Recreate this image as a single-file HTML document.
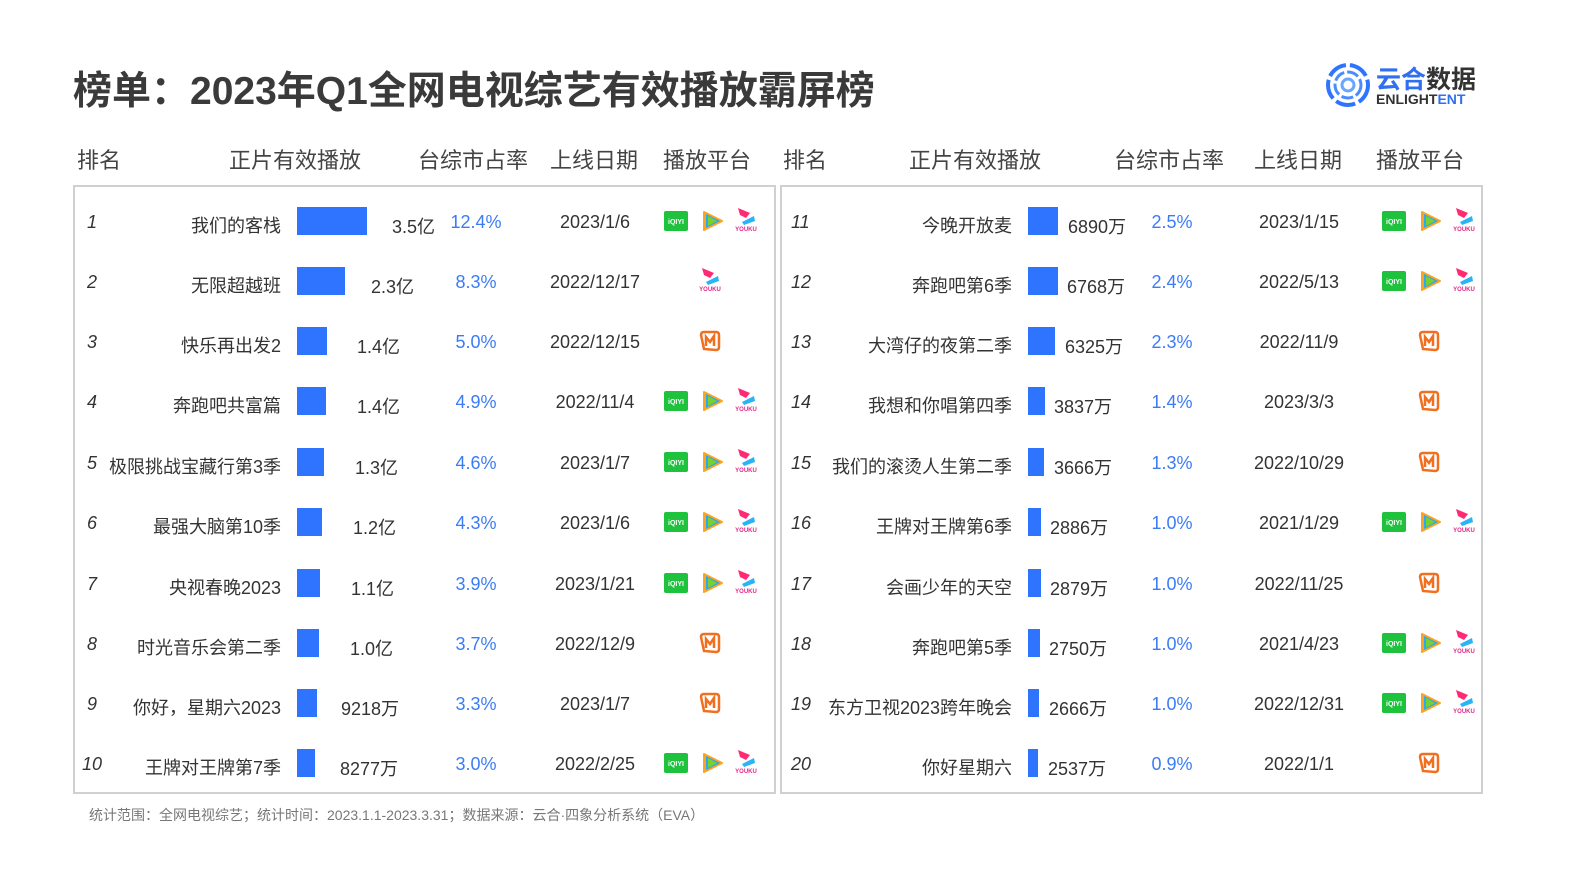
<!DOCTYPE html>
<html><head><meta charset="utf-8"><style>
*{margin:0;padding:0;box-sizing:border-box}
body{width:1587px;height:892px;background:#fff;position:relative;overflow:hidden;font-family:"Liberation Sans","Noto Sans CJK SC",sans-serif;color:#333}
.a{position:absolute;white-space:nowrap}
.t{left:73px;top:60px;font-size:39px;font-weight:bold;color:#3a3a3a;letter-spacing:0px}
.h{top:143px;font-size:22px;color:#444}
.panel{position:absolute;top:185px;height:609px;border:2px solid #d0d0d0}
.row>.a{margin-top:3px}
.r{font-size:18px;font-style:italic;color:#333}
.n{font-size:18px;text-align:right;width:200px}
.v{font-size:18px}
.p{font-size:18px;color:#3b7cf5;text-align:center;width:80px}
.d{font-size:18px;text-align:center;width:120px}
.b{position:absolute;height:28px;background:#2f74ff}
.ic{position:absolute;width:24px;height:24px}
.foot{left:89px;top:805px;font-size:14px;color:#777}
</style></head><body>
<svg width="0" height="0" style="position:absolute">
<defs>
<symbol id="iq" viewBox="0 0 24 24"><rect x="0" y="2" width="24" height="20" rx="2" fill="#1ec23c"/><text x="12" y="15" font-size="7" font-weight="bold" fill="#fff" text-anchor="middle" font-family="Liberation Sans">iQIYI</text></symbol>
<symbol id="tx" viewBox="0 0 24 24"><path d="M4 3 L22 12 L4 21 Z" fill="#ffa21f" stroke="#ffa21f" stroke-width="2" stroke-linejoin="round"/><path d="M6 5 L20 12 L6 19 Z" fill="#28a8f5"/><path d="M8 7 L17 12 L8 17 Z" fill="#7ad12b"/></symbol>
<symbol id="yk" viewBox="0 0 24 24"><path d="M4 1 L16 6 L12 11 L6 8 Z" fill="#ff2a73"/><path d="M8 15 L20 9 L21 14 L10 18 Z" fill="#2bb3f7"/><text x="12" y="24" font-size="6" font-weight="bold" fill="#e5268a" text-anchor="middle" font-family="Liberation Sans">YOUKU</text></symbol>
<symbol id="mg" viewBox="0 0 24 24"><path d="M6 20 L3 6 Q3 3 6 3 L18 3 Q21 3 21 6 L21 18 Q21 21 18 21 Z" fill="none" stroke="#f07020" stroke-width="2.5"/><path d="M8 17 V8 L12 13 L16 7 V17" fill="none" stroke="#f07020" stroke-width="2.5"/></symbol>
</defs></svg>

<div class="a t">榜单：2023年Q1全网电视综艺有效播放霸屏榜</div>
<svg class="a" style="left:1325px;top:61px" width="46" height="48" viewBox="0 0 46 48"><circle cx="23" cy="24" r="20" fill="none" stroke="#2f74ff" stroke-width="4" stroke-dasharray="20 4"/><circle cx="23" cy="24" r="13" fill="none" stroke="#4a8cff" stroke-width="3" stroke-dasharray="12 3"/><circle cx="23" cy="24" r="6" fill="none" stroke="#6aa6ff" stroke-width="3"/></svg>
<div class="a" style="left:1376px;top:60px;font-size:25px;font-weight:bold;color:#2f6ff0;letter-spacing:0px">云合<span style="color:#333">数据</span></div>
<div class="a" style="left:1376px;top:91px;font-size:14px;font-weight:bold;color:#333">ENLIGHT<span style="color:#2f6ff0">ENT</span></div>

<div class="a h" style="left:77px">排名</div>
<div class="a h" style="left:229px">正片有效播放</div>
<div class="a h" style="left:418px">台综市占率</div>
<div class="a h" style="left:550px">上线日期</div>
<div class="a h" style="left:663px">播放平台</div>
<div class="a h" style="left:783px">排名</div>
<div class="a h" style="left:909px">正片有效播放</div>
<div class="a h" style="left:1114px">台综市占率</div>
<div class="a h" style="left:1254px">上线日期</div>
<div class="a h" style="left:1376px">播放平台</div>

<div class="panel" style="left:73px;width:703px"></div>
<div class="panel" style="left:780px;width:703px"></div>

<!-- left rows -->
<div class="row" style="position:absolute;left:0;top:207px">
<div class="a r" style="left:87px;top:2px">1</div><div class="a n" style="left:81px;top:2px">我们的客栈</div><div class="b" style="left:297px;width:70px"></div><div class="a v" style="left:392px;top:3px">3.5亿</div><div class="a p" style="left:436px;top:2px">12.4%</div><div class="a d" style="left:535px;top:2px">2023/1/6</div>
<svg class="ic" style="left:664px;top:2px"><use href="#iq"/></svg><svg class="ic" style="left:700px;top:2px"><use href="#tx"/></svg><svg class="ic" style="left:734px;top:0px"><use href="#yk"/></svg>
</div>
<div class="row" style="position:absolute;left:0;top:267px">
<div class="a r" style="left:87px;top:2px">2</div><div class="a n" style="left:81px;top:2px">无限超越班</div><div class="b" style="left:297px;width:48px"></div><div class="a v" style="left:371px;top:3px">2.3亿</div><div class="a p" style="left:436px;top:2px">8.3%</div><div class="a d" style="left:535px;top:2px">2022/12/17</div>
<svg class="ic" style="left:698px;top:0px"><use href="#yk"/></svg>
</div>
<div class="row" style="position:absolute;left:0;top:327px">
<div class="a r" style="left:87px;top:2px">3</div><div class="a n" style="left:81px;top:2px">快乐再出发2</div><div class="b" style="left:297px;width:30px"></div><div class="a v" style="left:357px;top:3px">1.4亿</div><div class="a p" style="left:436px;top:2px">5.0%</div><div class="a d" style="left:535px;top:2px">2022/12/15</div>
<svg class="ic" style="left:698px;top:2px"><use href="#mg"/></svg>
</div>
<div class="row" style="position:absolute;left:0;top:387px">
<div class="a r" style="left:87px;top:2px">4</div><div class="a n" style="left:81px;top:2px">奔跑吧共富篇</div><div class="b" style="left:297px;width:29px"></div><div class="a v" style="left:357px;top:3px">1.4亿</div><div class="a p" style="left:436px;top:2px">4.9%</div><div class="a d" style="left:535px;top:2px">2022/11/4</div>
<svg class="ic" style="left:664px;top:2px"><use href="#iq"/></svg><svg class="ic" style="left:700px;top:2px"><use href="#tx"/></svg><svg class="ic" style="left:734px;top:0px"><use href="#yk"/></svg>
</div>
<div class="row" style="position:absolute;left:0;top:448px">
<div class="a r" style="left:87px;top:2px">5</div><div class="a n" style="left:81px;top:2px">极限挑战宝藏行第3季</div><div class="b" style="left:297px;width:27px"></div><div class="a v" style="left:355px;top:3px">1.3亿</div><div class="a p" style="left:436px;top:2px">4.6%</div><div class="a d" style="left:535px;top:2px">2023/1/7</div>
<svg class="ic" style="left:664px;top:2px"><use href="#iq"/></svg><svg class="ic" style="left:700px;top:2px"><use href="#tx"/></svg><svg class="ic" style="left:734px;top:0px"><use href="#yk"/></svg>
</div>
<div class="row" style="position:absolute;left:0;top:508px">
<div class="a r" style="left:87px;top:2px">6</div><div class="a n" style="left:81px;top:2px">最强大脑第10季</div><div class="b" style="left:297px;width:25px"></div><div class="a v" style="left:353px;top:3px">1.2亿</div><div class="a p" style="left:436px;top:2px">4.3%</div><div class="a d" style="left:535px;top:2px">2023/1/6</div>
<svg class="ic" style="left:664px;top:2px"><use href="#iq"/></svg><svg class="ic" style="left:700px;top:2px"><use href="#tx"/></svg><svg class="ic" style="left:734px;top:0px"><use href="#yk"/></svg>
</div>
<div class="row" style="position:absolute;left:0;top:569px">
<div class="a r" style="left:87px;top:2px">7</div><div class="a n" style="left:81px;top:2px">央视春晚2023</div><div class="b" style="left:297px;width:23px"></div><div class="a v" style="left:351px;top:3px">1.1亿</div><div class="a p" style="left:436px;top:2px">3.9%</div><div class="a d" style="left:535px;top:2px">2023/1/21</div>
<svg class="ic" style="left:664px;top:2px"><use href="#iq"/></svg><svg class="ic" style="left:700px;top:2px"><use href="#tx"/></svg><svg class="ic" style="left:734px;top:0px"><use href="#yk"/></svg>
</div>
<div class="row" style="position:absolute;left:0;top:629px">
<div class="a r" style="left:87px;top:2px">8</div><div class="a n" style="left:81px;top:2px">时光音乐会第二季</div><div class="b" style="left:297px;width:22px"></div><div class="a v" style="left:350px;top:3px">1.0亿</div><div class="a p" style="left:436px;top:2px">3.7%</div><div class="a d" style="left:535px;top:2px">2022/12/9</div>
<svg class="ic" style="left:698px;top:2px"><use href="#mg"/></svg>
</div>
<div class="row" style="position:absolute;left:0;top:689px">
<div class="a r" style="left:87px;top:2px">9</div><div class="a n" style="left:81px;top:2px">你好，星期六2023</div><div class="b" style="left:297px;width:20px"></div><div class="a v" style="left:341px;top:3px">9218万</div><div class="a p" style="left:436px;top:2px">3.3%</div><div class="a d" style="left:535px;top:2px">2023/1/7</div>
<svg class="ic" style="left:698px;top:2px"><use href="#mg"/></svg>
</div>
<div class="row" style="position:absolute;left:0;top:749px">
<div class="a r" style="left:82px;top:2px">10</div><div class="a n" style="left:81px;top:2px">王牌对王牌第7季</div><div class="b" style="left:297px;width:18px"></div><div class="a v" style="left:340px;top:3px">8277万</div><div class="a p" style="left:436px;top:2px">3.0%</div><div class="a d" style="left:535px;top:2px">2022/2/25</div>
<svg class="ic" style="left:664px;top:2px"><use href="#iq"/></svg><svg class="ic" style="left:700px;top:2px"><use href="#tx"/></svg><svg class="ic" style="left:734px;top:0px"><use href="#yk"/></svg>
</div>

<!-- right rows -->
<div class="row" style="position:absolute;left:0;top:207px">
<div class="a r" style="left:791px;top:2px">11</div><div class="a n" style="left:812px;top:2px">今晚开放麦</div><div class="b" style="left:1028px;width:30px"></div><div class="a v" style="left:1068px;top:3px">6890万</div><div class="a p" style="left:1132px;top:2px">2.5%</div><div class="a d" style="left:1239px;top:2px">2023/1/15</div>
<svg class="ic" style="left:1382px;top:2px"><use href="#iq"/></svg><svg class="ic" style="left:1418px;top:2px"><use href="#tx"/></svg><svg class="ic" style="left:1452px;top:0px"><use href="#yk"/></svg>
</div>
<div class="row" style="position:absolute;left:0;top:267px">
<div class="a r" style="left:791px;top:2px">12</div><div class="a n" style="left:812px;top:2px">奔跑吧第6季</div><div class="b" style="left:1028px;width:30px"></div><div class="a v" style="left:1067px;top:3px">6768万</div><div class="a p" style="left:1132px;top:2px">2.4%</div><div class="a d" style="left:1239px;top:2px">2022/5/13</div>
<svg class="ic" style="left:1382px;top:2px"><use href="#iq"/></svg><svg class="ic" style="left:1418px;top:2px"><use href="#tx"/></svg><svg class="ic" style="left:1452px;top:0px"><use href="#yk"/></svg>
</div>
<div class="row" style="position:absolute;left:0;top:327px">
<div class="a r" style="left:791px;top:2px">13</div><div class="a n" style="left:812px;top:2px">大湾仔的夜第二季</div><div class="b" style="left:1028px;width:27px"></div><div class="a v" style="left:1065px;top:3px">6325万</div><div class="a p" style="left:1132px;top:2px">2.3%</div><div class="a d" style="left:1239px;top:2px">2022/11/9</div>
<svg class="ic" style="left:1417px;top:2px"><use href="#mg"/></svg>
</div>
<div class="row" style="position:absolute;left:0;top:387px">
<div class="a r" style="left:791px;top:2px">14</div><div class="a n" style="left:812px;top:2px">我想和你唱第四季</div><div class="b" style="left:1028px;width:17px"></div><div class="a v" style="left:1054px;top:3px">3837万</div><div class="a p" style="left:1132px;top:2px">1.4%</div><div class="a d" style="left:1239px;top:2px">2023/3/3</div>
<svg class="ic" style="left:1417px;top:2px"><use href="#mg"/></svg>
</div>
<div class="row" style="position:absolute;left:0;top:448px">
<div class="a r" style="left:791px;top:2px">15</div><div class="a n" style="left:812px;top:2px">我们的滚烫人生第二季</div><div class="b" style="left:1028px;width:16px"></div><div class="a v" style="left:1054px;top:3px">3666万</div><div class="a p" style="left:1132px;top:2px">1.3%</div><div class="a d" style="left:1239px;top:2px">2022/10/29</div>
<svg class="ic" style="left:1417px;top:2px"><use href="#mg"/></svg>
</div>
<div class="row" style="position:absolute;left:0;top:508px">
<div class="a r" style="left:791px;top:2px">16</div><div class="a n" style="left:812px;top:2px">王牌对王牌第6季</div><div class="b" style="left:1028px;width:13px"></div><div class="a v" style="left:1050px;top:3px">2886万</div><div class="a p" style="left:1132px;top:2px">1.0%</div><div class="a d" style="left:1239px;top:2px">2021/1/29</div>
<svg class="ic" style="left:1382px;top:2px"><use href="#iq"/></svg><svg class="ic" style="left:1418px;top:2px"><use href="#tx"/></svg><svg class="ic" style="left:1452px;top:0px"><use href="#yk"/></svg>
</div>
<div class="row" style="position:absolute;left:0;top:569px">
<div class="a r" style="left:791px;top:2px">17</div><div class="a n" style="left:812px;top:2px">会画少年的天空</div><div class="b" style="left:1028px;width:13px"></div><div class="a v" style="left:1050px;top:3px">2879万</div><div class="a p" style="left:1132px;top:2px">1.0%</div><div class="a d" style="left:1239px;top:2px">2022/11/25</div>
<svg class="ic" style="left:1417px;top:2px"><use href="#mg"/></svg>
</div>
<div class="row" style="position:absolute;left:0;top:629px">
<div class="a r" style="left:791px;top:2px">18</div><div class="a n" style="left:812px;top:2px">奔跑吧第5季</div><div class="b" style="left:1028px;width:12px"></div><div class="a v" style="left:1049px;top:3px">2750万</div><div class="a p" style="left:1132px;top:2px">1.0%</div><div class="a d" style="left:1239px;top:2px">2021/4/23</div>
<svg class="ic" style="left:1382px;top:2px"><use href="#iq"/></svg><svg class="ic" style="left:1418px;top:2px"><use href="#tx"/></svg><svg class="ic" style="left:1452px;top:0px"><use href="#yk"/></svg>
</div>
<div class="row" style="position:absolute;left:0;top:689px">
<div class="a r" style="left:791px;top:2px">19</div><div class="a n" style="left:812px;top:2px">东方卫视2023跨年晚会</div><div class="b" style="left:1028px;width:11px"></div><div class="a v" style="left:1049px;top:3px">2666万</div><div class="a p" style="left:1132px;top:2px">1.0%</div><div class="a d" style="left:1239px;top:2px">2022/12/31</div>
<svg class="ic" style="left:1382px;top:2px"><use href="#iq"/></svg><svg class="ic" style="left:1418px;top:2px"><use href="#tx"/></svg><svg class="ic" style="left:1452px;top:0px"><use href="#yk"/></svg>
</div>
<div class="row" style="position:absolute;left:0;top:749px">
<div class="a r" style="left:791px;top:2px">20</div><div class="a n" style="left:812px;top:2px">你好星期六</div><div class="b" style="left:1028px;width:10px"></div><div class="a v" style="left:1048px;top:3px">2537万</div><div class="a p" style="left:1132px;top:2px">0.9%</div><div class="a d" style="left:1239px;top:2px">2022/1/1</div>
<svg class="ic" style="left:1417px;top:2px"><use href="#mg"/></svg>
</div>

<div class="a foot">统计范围：全网电视综艺；统计时间：2023.1.1-2023.3.31；数据来源：云合·四象分析系统（EVA）</div>
</body></html>
